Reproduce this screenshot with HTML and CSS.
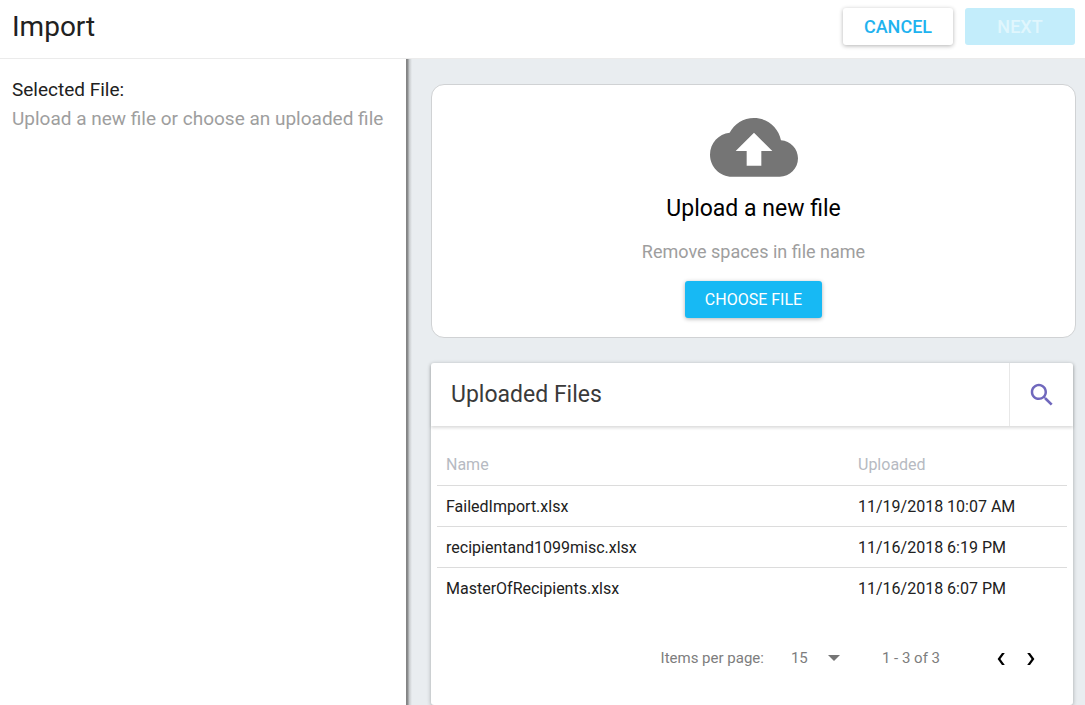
FILE: index.html
```html
<!DOCTYPE html>
<html lang="en">
<head>
<meta charset="utf-8">
<meta name="viewport" content="width=device-width, initial-scale=1">
<title>Import</title>
<link rel="stylesheet" href="styles.css">
</head>
<body>
<header class="topbar">
  <h1 class="topbar-title">Import</h1>
  <div class="topbar-actions">
    <button class="btn btn-plain" type="button">CANCEL</button>
    <button class="btn btn-next" type="button" disabled>NEXT</button>
  </div>
</header>
<div class="layout">
  <aside class="selected">
    <h2 class="selected-title">Selected File:</h2>
    <p class="selected-hint">Upload a new file or choose an uploaded file</p>
  </aside>
  <main class="content">
    <section class="upload">
      <svg class="upload-icon" viewBox="0 4 24 16" aria-hidden="true"><path d="M19.35 10.04C18.67 6.59 15.64 4 12 4 9.11 4 6.6 5.64 5.35 8.04 2.34 8.36 0 10.91 0 14c0 3.31 2.69 6 6 6h13c2.76 0 5-2.24 5-5 0-2.64-2.05-4.78-4.65-4.96zM14 13v4h-4v-4H7l5-5 5 5h-3z"/></svg>
      <h2 class="upload-title">Upload a new file</h2>
      <p class="upload-hint">Remove spaces in file name</p>
      <button class="btn btn-primary" type="button">CHOOSE FILE</button>
    </section>
    <section class="files">
      <div class="files-head">
        <h2 class="files-title">Uploaded Files</h2>
        <button class="files-search" type="button" aria-label="Search">
          <svg class="search-icon" viewBox="0 0 24 24" aria-hidden="true"><path d="M15.5 14h-.79l-.28-.27C15.41 12.59 16 11.11 16 9.5 16 5.91 13.09 3 9.5 3S3 5.91 3 9.5 5.91 16 9.5 16c1.61 0 3.09-.59 4.23-1.57l.27.28v.79l5 4.99L20.49 19l-4.99-5zm-6 0C7.01 14 5 11.99 5 9.5S7.01 5 9.5 5 14 7.01 14 9.5 11.99 14 9.5 14z"/></svg>
        </button>
      </div>
      <table class="table">
        <thead>
          <tr><th class="col-name" scope="col">Name</th><th class="col-date" scope="col">Uploaded</th></tr>
        </thead>
        <tbody>
          <tr><td>FailedImport.xlsx</td><td>11/19/2018 10:07 AM</td></tr>
          <tr><td>recipientand1099misc.xlsx</td><td>11/16/2018 6:19 PM</td></tr>
          <tr><td>MasterOfRecipients.xlsx</td><td>11/16/2018 6:07 PM</td></tr>
        </tbody>
      </table>
      <div class="pager">
        <label for="page-size">Items per page:</label>
        <div class="pager-size">
          <select class="pager-select" id="page-size"><option>15</option><option>30</option></select>
          <svg class="pager-caret" viewBox="0 0 12 6" aria-hidden="true"><path d="M0 0h12L6 6z"/></svg>
        </div>
        <span class="pager-range">1 - 3 of 3</span>
        <div class="pager-nav">
          <button class="pager-btn" type="button" aria-label="Previous page"><svg class="pager-arrow" viewBox="0 0 8 12" aria-hidden="true"><path d="M5 0h2.800L3.400 6l4.400 6H5L0.600 6z"/></svg></button>
          <button class="pager-btn" type="button" aria-label="Next page"><svg class="pager-arrow" viewBox="0 0 8 12" aria-hidden="true"><path d="M3 0H0.200l4.400 6-4.400 6H3l4.400-6z"/></svg></button>
        </div>
      </div>
    </section>
  </main>
</div>
</body>
</html>
```
FILE: styles.css
```css
* {
  box-sizing: border-box;
}

body {
  margin: 0;
  min-height: 100vh;
  display: flex;
  flex-direction: column;
  font-family: Roboto, "Liberation Sans", sans-serif;
  font-size: 16px;
  color: #212121;
  background: #fff;
}

h1, h2, p {
  margin: 0;
  font-weight: 400;
}

button {
  font-family: inherit;
  border: 0;
  padding: 0;
  cursor: pointer;
}

.topbar {
  display: flex;
  justify-content: space-between;
  align-items: flex-start;
  padding: 8px 10px 13px 12px;
  border-bottom: 1px solid #ebebeb;
}

.topbar-title {
  font-size: 28px;
  line-height: 37px;
}

.topbar-actions {
  display: flex;
  gap: 12px;
}

.btn {
  height: 37px;
  border-radius: 3px;
  font-weight: 500;
  font-size: 18px;
}

.btn-plain,
.btn-next {
  width: 110px;
}

.btn-plain {
  background: #fff;
  color: #1fb3ef;
  box-shadow: 0 1px 4px rgba(0, 0, 0, 0.3);
}

.btn-next {
  background: #c3edfb;
  color: #e0f6fd;
}

.btn-primary {
  padding: 0 20px;
  font-size: 16px;
  font-weight: 400;
  background: #17b9f4;
  color: #fff;
  box-shadow: 0 1px 4px rgba(0, 0, 0, 0.3);
}

.layout {
  flex: 1;
  display: grid;
  grid-template-columns: 406fr 679fr;
}

.selected {
  padding: 16px 12px;
}

.selected-title,
.selected-hint {
  font-size: 19px;
  line-height: 29px;
}

.selected-hint {
  color: #9e9e9e;
}

.content {
  display: flex;
  flex-direction: column;
  gap: 25px;
  padding: 25px 9px 0 25px;
  background: linear-gradient(to right, #808080 0, #8e9092 2px, #c4c7c9 3px, #e9edf0 6px);
}

.upload {
  display: flex;
  flex-direction: column;
  align-items: center;
  padding: 33px 20px 19px;
  background: #fff;
  border: 1px solid #d0d2d4;
  border-radius: 13px;
}

.upload-icon {
  width: 88px;
  fill: #757575;
}

.upload-title {
  margin-top: 17px;
  font-size: 23px;
  line-height: 30px;
  color: #000;
}

.upload-hint {
  margin: 15px 0 16px;
  font-size: 18px;
  line-height: 26px;
  color: #9e9e9e;
}

.files {
  flex: 1;
  margin-right: 3px;
  background: #fff;
  border-radius: 3px;
  box-shadow: 0 1px 4px rgba(0, 0, 0, 0.3);
}

.files-head {
  display: flex;
  justify-content: space-between;
  height: 63px;
  padding-left: 20px;
  box-shadow: 0 2px 3px rgba(0, 0, 0, 0.14);
}

.files-title {
  font-size: 23px;
  line-height: 63px;
  color: #3a3a3a;
}

.files-search {
  display: grid;
  place-items: center;
  width: 64px;
  padding-top: 2px;
  background: none;
  border-left: 1px solid #e8e8e8;
}

.search-icon {
  width: 30px;
  fill: #7068bd;
}

.table {
  width: calc(100% - 12px);
  margin: 19px 6px 0;
  border-collapse: collapse;
  table-layout: fixed;
}

.table th,
.table td {
  height: 41px;
  padding: 0 9px;
  text-align: left;
  font-weight: 400;
}

.table th {
  color: #b6bac2;
}

.table td {
  border-top: 1px solid #dcdcdc;
}

.col-date {
  width: 218px;
}

.pager {
  display: flex;
  justify-content: flex-end;
  align-items: center;
  margin-top: 34px;
  padding-right: 27px;
  font-size: 15px;
  line-height: 30px;
  color: #7d7d7d;
}

.pager-size {
  display: flex;
  align-items: center;
  gap: 8px;
  margin: 0 42px 0 27px;
}

.pager-select {
  appearance: none;
  width: 29px;
  padding: 0;
  border: 0;
  background: none;
  font: inherit;
  color: inherit;
}

.pager-caret {
  width: 12px;
  fill: #757575;
}

.pager-nav {
  display: flex;
  margin-left: 46px;
}

.pager-btn {
  display: grid;
  place-items: center;
  width: 30px;
  height: 30px;
  padding-top: 2px;
  background: none;
}

.pager-arrow {
  width: 8px;
  fill: #000;
}
```
